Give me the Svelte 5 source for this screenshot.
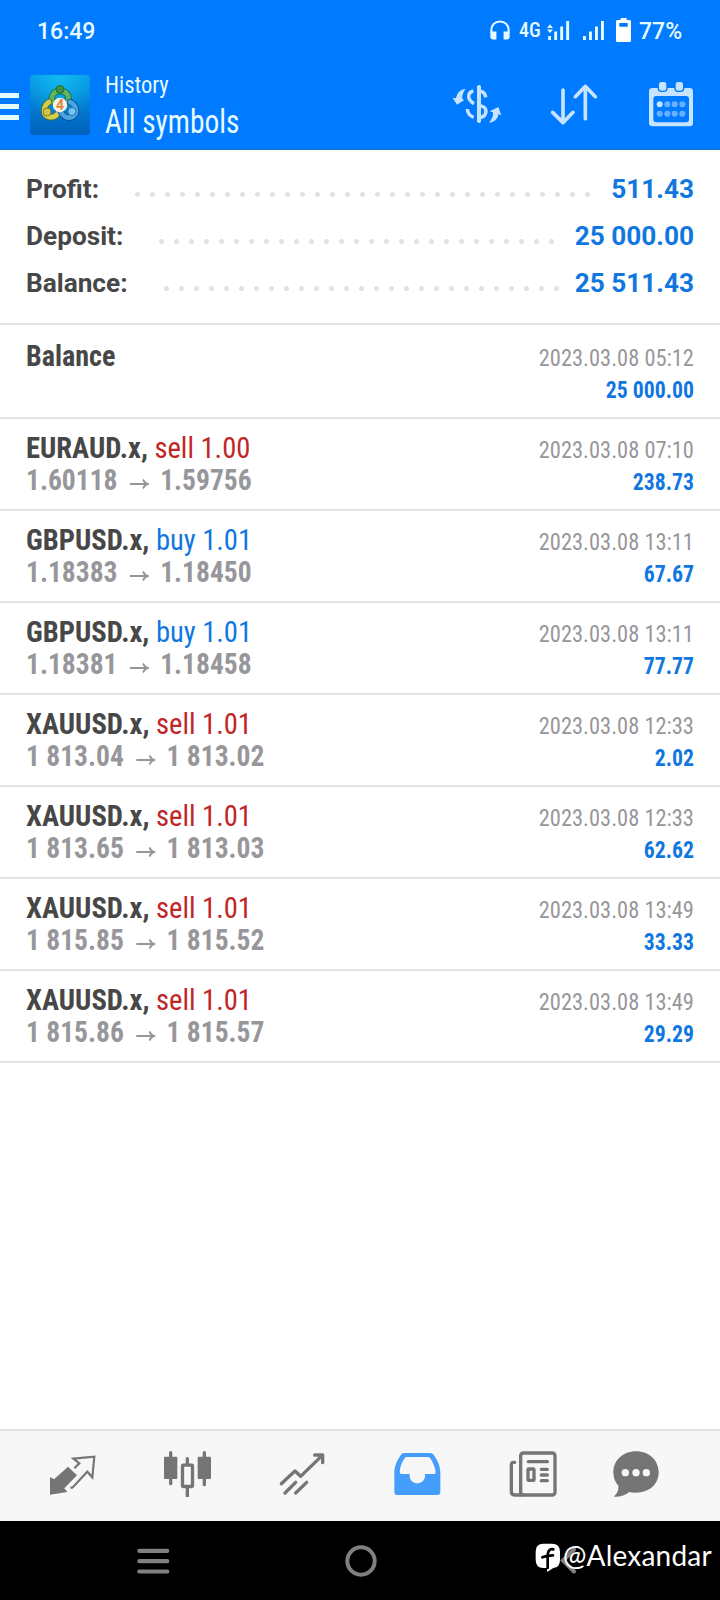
<script>
  const summary = [
    { label: "Profit:", value: "511.43", dots: 31 },
    { label: "Deposit:", value: "25 000.00", dots: 27 },
    { label: "Balance:", value: "25 511.43", dots: 27 },
  ];

  const deals = [
    { symbol: "Balance", time: "2023.03.08 05:12", profit: "25 000.00" },
    { symbol: "EURAUD.x", side: "sell", volume: "1.00", open: "1.60118", close: "1.59756", time: "2023.03.08 07:10", profit: "238.73" },
    { symbol: "GBPUSD.x", side: "buy", volume: "1.01", open: "1.18383", close: "1.18450", time: "2023.03.08 13:11", profit: "67.67" },
    { symbol: "GBPUSD.x", side: "buy", volume: "1.01", open: "1.18381", close: "1.18458", time: "2023.03.08 13:11", profit: "77.77" },
    { symbol: "XAUUSD.x", side: "sell", volume: "1.01", open: "1 813.04", close: "1 813.02", time: "2023.03.08 12:33", profit: "2.02" },
    { symbol: "XAUUSD.x", side: "sell", volume: "1.01", open: "1 813.65", close: "1 813.03", time: "2023.03.08 12:33", profit: "62.62" },
    { symbol: "XAUUSD.x", side: "sell", volume: "1.01", open: "1 815.85", close: "1 815.52", time: "2023.03.08 13:49", profit: "33.33" },
    { symbol: "XAUUSD.x", side: "sell", volume: "1.01", open: "1 815.86", close: "1 815.57", time: "2023.03.08 13:49", profit: "29.29" },
  ];
</script>

<div class="screen">
  <header>
    <div class="status">
      <span class="clock">16:49</span>
      <svg class="headphones" width="20" height="20" viewBox="0 0 20 20">
        <path d="M1.4 13V9.6a8.6 8.2 0 0 1 17.2 0V13" fill="none" stroke="#e6fbff" stroke-width="2" />
        <path d="M.4 11.4H6.4V19.4H3a2.6 2.6 0 0 1-2.6-2.6ZM19.6 11.4H13.6V19.4H17a2.6 2.6 0 0 0 2.6-2.6Z" fill="#e6fbff" />
      </svg>
      <span class="network">4G</span>
      <svg class="signal" width="23" height="20" viewBox="0 0 23 20" fill="#e6fbff">
        <path d="M0 7 3 3.2 6 7ZM0 8.4H6L3 12ZM1.2 15H4v4H1.2ZM7.2 10.4h2.9V19H7.2ZM13.2 5.4h2.9V19h-2.9ZM19.2 0h2.9v19h-2.9Z" />
      </svg>
      <svg class="signal second" width="22" height="20" viewBox="0 0 22 20" fill="#e6fbff">
        <path d="M0 15H2.9v4H0ZM6 10.4h2.9V19H6ZM12 5.4h2.9V19H12ZM18 0h2.9v19H18Z" />
      </svg>
      <svg class="battery" width="15" height="24" viewBox="0 0 15 24">
        <path fill="#fff" fill-rule="evenodd" d="M4.6 0h6v2H13.5a1.500 1.500 0 0 1 1.500 1.500V22.500a1.500 1.500 0 0 1-1.500 1.500H1.500a1.500 1.500 0 0 1-1.500-1.500V3.500A1.500 1.500 0 0 1 1.500 2H4.600ZM3.300 5V8.700H11.700V5Z" />
      </svg>
      <span class="percent">77%</span>
    </div>

    <div class="toolbar">
      <div class="menu"><i></i><i></i><i></i></div>
      <svg class="logo" width="60" height="60" viewBox="0 0 60 60">
        <defs>
          <linearGradient id="tile" x1="0" y1="0" x2="0" y2="1">
            <stop offset="0" stop-color="#0599e6" />
            <stop offset="1" stop-color="#0061bd" />
          </linearGradient>
          <radialGradient id="glow" cx=".5" cy=".05" r=".65">
            <stop offset="0" stop-color="#12b9ee" />
            <stop offset="1" stop-color="#12b9ee" stop-opacity="0" />
          </radialGradient>
        </defs>
        <rect width="60" height="60" rx="4" fill="url(#tile)" />
        <rect width="60" height="60" rx="4" fill="url(#glow)" />
        <g fill="none" stroke-linecap="round">
          <path d="M22 27c-1-7 2-11 8-11s10 4 8 11" stroke="#1d6b46" stroke-width="6.500" />
          <path d="M22 27c-1-7 2-11 8-11s10 4 8 11" stroke="#5fb560" stroke-width="4.800" />
          <path d="M19 27c-6 4-7 13 0 15 5 1 9-2 10-6" stroke="#54702f" stroke-width="6.500" />
          <path d="M19 27c-6 4-7 13 0 15 5 1 9-2 10-6" stroke="#d4cd4d" stroke-width="4.800" />
          <path d="M40 27c7 3 8 12 2 15-5 2-9-1-11-5" stroke="#084f91" stroke-width="6.500" />
          <path d="M40 27c7 3 8 12 2 15-5 2-9-1-11-5" stroke="#4da5df" stroke-width="4.800" />
        </g>
        <circle cx="30" cy="14.500" r="4" fill="#3d9440" stroke="#1d6b46" />
        <circle cx="17" cy="37" r="4" fill="#cfc64a" stroke="#857d25" />
        <circle cx="42" cy="36.500" r="4" fill="#7cc4ee" stroke="#2377b8" />
        <circle cx="30" cy="30" r="7.200" fill="#f7f3e8" />
        <text x="30" y="34.800" text-anchor="middle">4</text>
      </svg>
      <div class="titles">
        <div class="subtitle">History</div>
        <div class="title">All symbols</div>
      </div>
      <svg class="symbols" width="54" height="46" viewBox="30 246 162 138">
        <g fill="none" stroke="#c6e3ff" stroke-width="10.500">
          <path d="M117 261V363" stroke-width="12" stroke-linecap="round" />
          <path d="M100 273C82 278 80 298 102 311" />
          <path d="M121 274Q136 277 137 292" />
          <path d="M121 317C145 323 142 347 121 353" />
          <path d="M82 327Q83 345 101 352" />
        </g>
        <path d="M38 293 48 295C51 279 61 268 77 267 70 275 66 285 67 297L73 300 51 314ZM184 346 176 342C173 357 164 367 147 368 156 358 160 348 159 337L149 334 175 321Z" fill="#c6e3ff" />
      </svg>
      <svg class="sort" width="48" height="42" viewBox="330 252 144 126" fill="none" stroke="#c6e3ff" stroke-width="11" stroke-linecap="round" stroke-linejoin="round">
        <path d="M369 270V368M338 337 369 368 399 337M436 356V259M406 290 436 259 466 290" />
      </svg>
      <svg class="calendar" width="44" height="46" viewBox="627 242 132 138">
        <path fill="#c6e3ff" fill-rule="evenodd" d="M637 263H749a10 10 0 0 1 10 10V368a10 10 0 0 1-10 10H637a10 10 0 0 1-10-10V273a10 10 0 0 1 10-10ZM649 287a9 9 0 0 0-9 9V357a9 9 0 0 0 9 9H738a9 9 0 0 0 9-9V296a9 9 0 0 0-9-9Z" />
        <g fill="#c6e3ff" stroke="#007aff" stroke-width="4">
          <rect x="655" y="243" width="26" height="30" rx="9" />
          <rect x="705" y="243" width="26" height="30" rx="9" />
        </g>
        <circle cx="659" cy="312" r="9" fill="#c6e3ff" />
        <g fill="#69b1ff">
          {#each [682, 704, 727] as cx}
            <circle {cx} cy="312" r="9" />
          {/each}
          {#each [659, 682, 704, 727] as cx}
            <circle {cx} cy="340" r="9" />
          {/each}
        </g>
      </svg>
    </div>
  </header>

  <section class="summary">
    {#each summary as row}
      <div class="summary-row">
        <span class="label">{row.label}</span>
        <span class="dots" style="width: {row.dots * 15}px"></span>
        <span class="amount">{row.value}</span>
      </div>
    {/each}
  </section>

  <main>
    {#each deals as deal}
      <article class="deal" class:transfer={!deal.side}>
        <div class="left">
          <div class="name">
            <b>{deal.symbol}{deal.side ? "," : ""}</b>
            {#if deal.side}<span class={deal.side}>{deal.side} {deal.volume}</span>{/if}
          </div>
          {#if deal.side}
            <div class="prices">
              <span>{deal.open}</span>
              <svg width="21" height="12" viewBox="0 0 21 12" fill="none" stroke="#97979b" stroke-width="2">
                <path d="M0 6H19M14.500 1.500Q16 5 19.500 6 16 7 14.500 10.500" />
              </svg>
              <span>{deal.close}</span>
            </div>
          {/if}
        </div>
        <div class="right">
          <div class="time">{deal.time}</div>
          <div class="profit">{deal.profit}</div>
        </div>
      </article>
    {/each}
  </main>

  <nav>
    <svg viewBox="144 87 144 144">
      <path d="M204 140 231 166 193 205 202 216 150 224V171L162 178Z" fill="#757575" />
      <path d="M211 203H217L262 155 277 172 283 110 220 116 238 130 223 145" fill="none" stroke="#757575" stroke-width="6.500" />
    </svg>
    <svg viewBox="489 87 144 144">
      <path d="M512 98V191M613 98V194M562 116V132M562 204V228" stroke="#757575" stroke-width="10" stroke-linecap="round" />
      <rect x="492" y="110" width="40" height="67" rx="3" fill="#757575" />
      <rect x="593" y="110" width="40" height="67" rx="3" fill="#757575" />
      <rect x="547.500" y="135.500" width="30" height="64" rx="2" fill="#f7f7f7" stroke="#757575" stroke-width="10" />
    </svg>
    <svg viewBox="114 87 144 144" fill="none" stroke="#757575" stroke-width="10" stroke-linecap="round" stroke-linejoin="round">
      <path d="M124 191 165 153 182 169 246 107M224 105H248V128M135 219 167 187M167 219 200 187" />
    </svg>
    <svg viewBox="459 87 144 144">
      <path fill="#459efc" fill-rule="evenodd" d="M493 99H571Q578 99 582 106C594 124 601 138 601 160V215Q601 225 591 225H473Q463 225 463 215V160C463 138 471 122 482 106Q486 99 493 99ZM501 111Q496 111 494 115C485 128 480 141 479 156Q479 162 486 162H509V169C511 197 553 197 555 169V162H582Q588 162 587 155C585 141 579 128 572 116Q569 111 564 111Z" />
    </svg>
    <svg viewBox="84 87 144 144" overflow="visible" fill="none" stroke="#757575" stroke-width="10" stroke-linecap="round">
      <path d="M104 127H101Q94 127 94 135V214Q94 225 104 225H128" />
      <rect x="122" y="99" width="103" height="126" rx="8" />
      <path d="M145 125H202M184 148H202M184 165H202M184 182H202" />
      <rect x="144" y="147" width="18" height="34" rx="2" />
    </svg>
    <svg class="chat" viewBox="396 87 144 144">
      <path d="M468 94C508 94 536 121 536 157S508 218 468 218Q455 218 448 216C436 226 420 231 401 230 412 220 416 211 415 197 406 188 400 174 400 157 400 121 429 94 468 94Z" fill="#757575" />
      <g fill="#f7f7f7">
        <circle cx="436" cy="158" r="11" />
        <circle cx="468" cy="158" r="11" />
        <circle cx="499" cy="158" r="11" />
      </g>
    </svg>
  </nav>

  <footer>
    <svg class="recents" width="33" height="26" viewBox="0 0 33 26" stroke="#808080" stroke-width="4.200" stroke-linecap="round">
      <path d="M2.300 2.800H30.300M2.300 13.200H30.300M2.300 23.500H30.300" />
    </svg>
    <svg class="home" width="32" height="32" viewBox="0 0 32 32">
      <circle cx="16" cy="16" r="13.700" fill="none" stroke="#808080" stroke-width="4" />
    </svg>
    <svg class="back" width="17" height="27" viewBox="0 0 17 27" fill="none" stroke="#808080" stroke-width="4" stroke-linecap="round">
      <path d="M14 2.500 3 13.500 14 24.500" />
    </svg>
    <div class="handle">
      <svg width="26" height="30" viewBox="165 370 78 90">
        <path d="M190 372H216Q240 372 240 396V420Q240 443 220 445L201 457V445H190Q167 445 167 420V396Q167 372 190 372Z" fill="#fff" />
        <path d="M220 389C208 386 203 396 203 407V445M187 413Q201 407 219 407" fill="none" stroke="#000" stroke-width="8" stroke-linecap="round" />
      </svg>
      <span>@Alexandar</span>
    </div>
  </footer>
</div>

<style>
  :global(body) {
    background: #fff;
  }

  .screen {
    width: 720px;
    height: 1600px;
    display: flex;
    flex-direction: column;
    overflow: hidden;
    background: #fff;
    font-family: Roboto, sans-serif;
    white-space: nowrap;
  }

  svg {
    display: block;
    flex: none;
  }

  header {
    height: 150px;
    box-sizing: border-box;
    background: #007aff;
    border-bottom: 1px solid #1b6fc4;
    color: #e6fbff;
  }

  .status {
    height: 60px;
    display: flex;
    align-items: center;
    font-size: 23px;
    font-weight: 500;
  }

  .clock {
    width: 453px;
    padding: 2px 0 0 37px;
  }

  .network {
    width: 28px;
    margin-left: 9px;
    font-family: "Roboto Condensed", Roboto, sans-serif;
    font-size: 20px;
    font-stretch: 75%;
    font-weight: 500;
  }

  .signal {
    margin-top: 1px;
  }

  .second {
    margin-left: 13px;
  }

  .battery {
    margin-left: 11px;
  }

  .percent {
    padding-top: 2px;
    margin-left: 8px;
  }

  .toolbar {
    height: 89px;
    display: flex;
    align-items: center;
  }

  .menu {
    width: 19px;
    display: flex;
    flex-direction: column;
    gap: 6px;
    margin: 3px 11px 0 0;
  }

  .menu i {
    height: 5px;
    background: #e6fbff;
  }

  .logo text {
    font-size: 14px;
    font-weight: 700;
    fill: #e8843e;
  }

  .titles {
    width: 345px;
    margin-left: 15px;
    padding-top: 2px;
    font-stretch: 75%;
    font-family: "Roboto Condensed", Roboto, sans-serif;
  }

  .subtitle {
    font-size: 24px;
    line-height: 34px;
    transform: scaleX(0.94);
    transform-origin: left;
  }

  .title {
    font-size: 32.500px;
    line-height: 41px;
    transform: scaleX(0.905);
    transform-origin: left;
  }

  .sort {
    margin-left: 46px;
  }

  .calendar {
    margin: -2px 0 0 51px;
  }

  .summary {
    height: 141px;
    padding: 16px 26px;
    border-bottom: 2px solid #e3e3e3;
  }

  .summary-row {
    height: 47px;
    line-height: 47px;
    display: flex;
    font-size: 26.200px;
    font-weight: 700;
    color: #474747;
  }

  .dots {
    height: 5px;
    margin: 26px 0 0 31px;
    background: radial-gradient(circle at center, #e3e3e3 2.200px, transparent 2.800px) 0 0 / 15px 5px;
  }

  .amount {
    margin-left: auto;
    color: #1177e0;
  }

  .deal {
    height: 77px;
    padding: 13px 26px 0;
    border-bottom: 2px solid #e3e3e3;
    display: flex;
    justify-content: space-between;
    line-height: 32px;
    font-family: "Roboto Condensed", Roboto, sans-serif;
    font-stretch: 75%;
  }

  .transfer {
    padding-top: 15px;
  }

  /* a touch narrower than the condensed cut */
  .name,
  .prices {
    transform-origin: left;
  }

  .name {
    font-size: 30px;
    color: #474747;
    transform: scaleX(0.952);
  }

  .transfer .name {
    transform: scaleX(0.935);
  }

  .sell {
    color: #c02626;
  }

  .buy,
  .profit {
    color: #1177e0;
  }

  .prices {
    display: flex;
    font-size: 30px;
    font-weight: 700;
    color: #97979b;
    transform: scaleX(0.918);
  }

  .prices svg {
    margin: 14px 12.500px 0 13px;
  }

  .right {
    padding-top: 2px;
    font-size: 24px;
    text-align: right;
  }

  .time {
    color: #97979b;
    transform: scaleX(0.935);
    transform-origin: right;
  }

  .profit {
    font-weight: 700;
    transform: scaleX(0.905);
    transform-origin: right;
  }

  nav {
    height: 72px;
    margin-top: auto;
    padding: 18px 0 0 48px;
    border-top: 2px solid #e3e3e3;
    background: #f7f7f7;
    display: flex;
    gap: 67px;
  }

  nav svg {
    width: 48px;
    height: 48px;
  }

  .chat {
    margin-left: -11px;
  }

  footer {
    position: relative;
    height: 79px;
    background: #000;
    display: flex;
    align-items: center;
  }

  .recents {
    margin-left: 137px;
  }

  .home {
    margin-left: 174.500px;
  }

  .back {
    margin-left: 183.500px;
  }

  /* account handle lies over the system back button */
  .handle {
    position: absolute;
    left: 535px;
    top: 22px;
    display: flex;
    color: #fff;
    font-family: Lato, sans-serif;
    font-size: 28px;
    line-height: 25px;
    letter-spacing: 0.2px;
  }

  .handle span {
    margin-left: 2px;
  }
</style>
